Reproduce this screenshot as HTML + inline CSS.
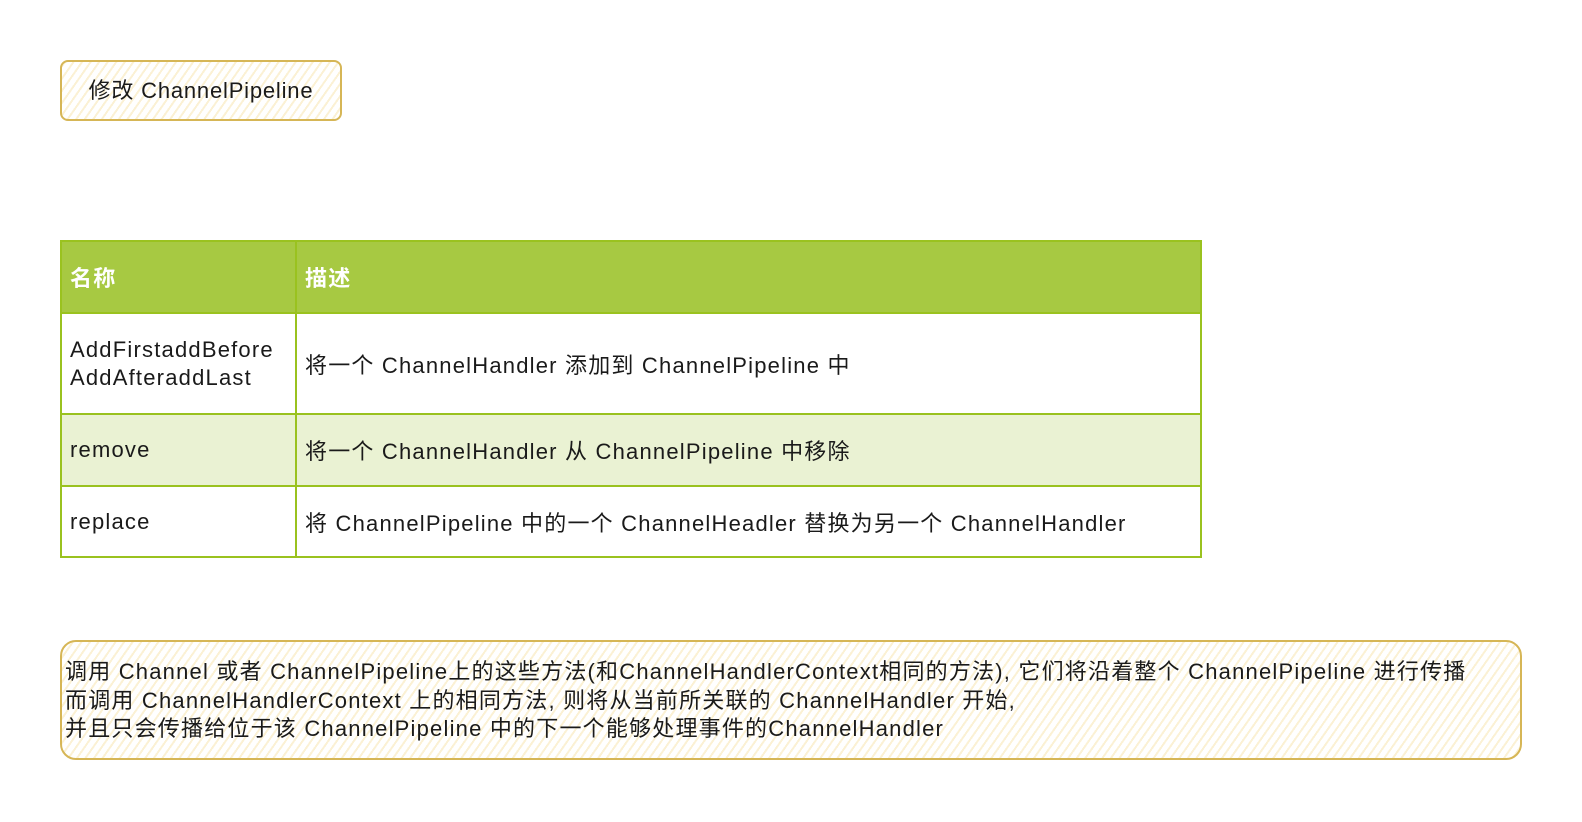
<!DOCTYPE html>
<html><head><meta charset="utf-8"><style>
body{margin:0;width:1582px;height:822px;background:#fff;position:relative;font-family:"Liberation Sans","Noto Sans CJK SC",sans-serif;color:#1a1a1a;overflow:hidden}
.hatch{background:repeating-linear-gradient(-55deg,#fff 0 5px,#fbf1d4 5px 7px);border:2.5px solid #d6b656}
#t{position:absolute;left:60px;top:60px;width:278px;height:57px;border-radius:8px;font-size:22px;letter-spacing:0.8px;line-height:57px;text-align:center}
table{position:absolute;left:60px;top:240px;width:1142px;border-collapse:collapse;font-size:22px;letter-spacing:1.2px}
td{border:2px solid #9ac21f;padding:0 8px;vertical-align:middle}
th{background:#a7c942;color:#fff;text-align:left;border:2px solid #9ac21f;padding:0 8px;height:70px;font-size:22px}
.alt td{background:#eaf2d3}
#n{position:absolute;left:60px;top:640px;width:1462px;height:120px;border-radius:16px;font-size:22px;letter-spacing:1.2px;line-height:28.5px;box-sizing:border-box;padding:16px 0 0 3px}
</style></head><body>
<div id="t" class="hatch">修改 ChannelPipeline</div>
<table>
<tr><th style="width:217px">名称</th><th>描述</th></tr>
<tr style="height:101px"><td style="line-height:28px">AddFirstaddBefore<br>AddAfteraddLast</td><td>将一个 ChannelHandler 添加到 ChannelPipeline 中</td></tr>
<tr class="alt" style="height:72px"><td>remove</td><td>将一个 ChannelHandler 从 ChannelPipeline 中移除</td></tr>
<tr style="height:71px"><td>replace</td><td>将 ChannelPipeline 中的一个 ChannelHeadler 替换为另一个 ChannelHandler</td></tr>
</table>
<div id="n" class="hatch">调用 Channel 或者 ChannelPipeline上的这些方法(和ChannelHandlerContext相同的方法), 它们将沿着整个 ChannelPipeline 进行传播<br>而调用 ChannelHandlerContext 上的相同方法, 则将从当前所关联的 ChannelHandler 开始,<br>并且只会传播给位于该 ChannelPipeline 中的下一个能够处理事件的ChannelHandler</div>
</body></html>
